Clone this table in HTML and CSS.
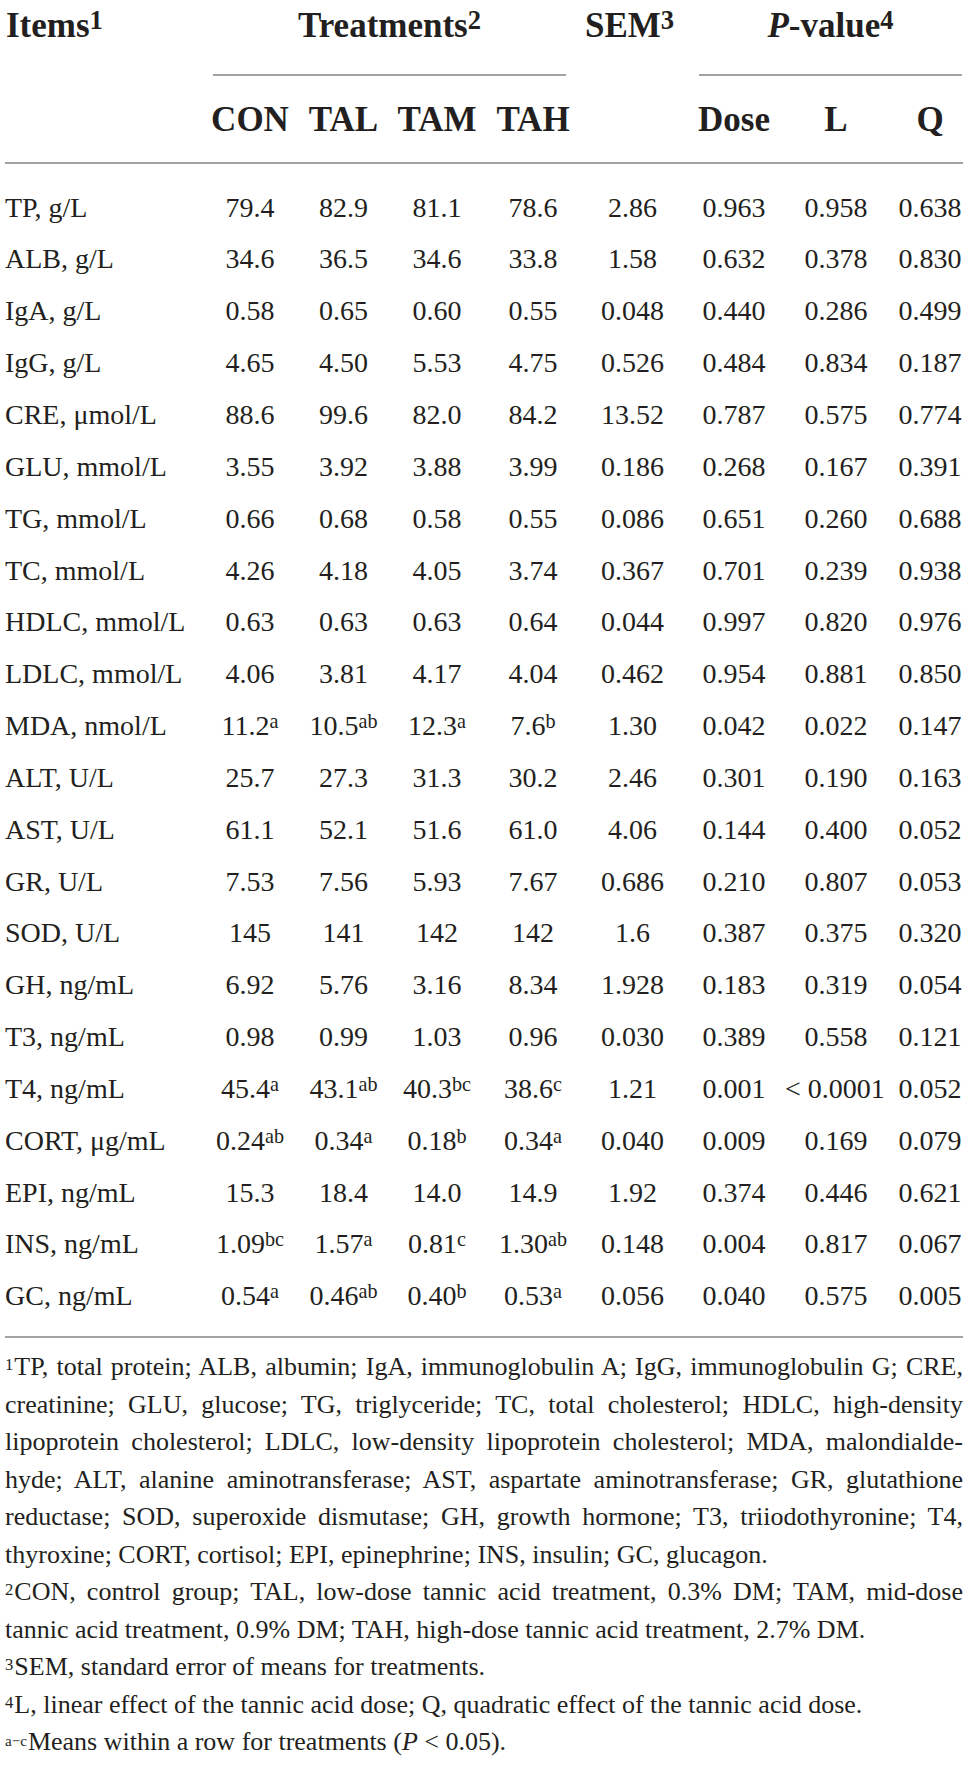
FILE: index.html
```html
<!DOCTYPE html>
<html lang="en">
<head>
<meta charset="utf-8">
<title>Serum biochemical parameters</title>
<link rel="stylesheet" href="styles.css">
</head>
<body>
<div class="page">
  <div class="tbl">
    <div class="grid hrow1">
      <div class="items">Items<sup class="hs">1</sup></div>
      <div class="span4">Treatments<sup class="hs">2</sup></div>
      <div class="sem">SEM<sup class="hs">3</sup></div>
      <div class="span3"><i>P</i>-value<sup class="hs">4</sup></div>
    </div>
    <div class="grid hrow2">
      <div></div>
      <div>CON</div>
      <div>TAL</div>
      <div>TAM</div>
      <div>TAH</div>
      <div></div>
      <div>Dose</div>
      <div>L</div>
      <div class="q">Q</div>
    </div>
    <div class="tbody">
      <div class="grid row"><div class="lab">TP, g/L</div><div>79.4</div><div>82.9</div><div>81.1</div><div>78.6</div><div>2.86</div><div>0.963</div><div>0.958</div><div class="q">0.638</div></div>
      <div class="grid row"><div class="lab">ALB, g/L</div><div>34.6</div><div>36.5</div><div>34.6</div><div>33.8</div><div>1.58</div><div>0.632</div><div>0.378</div><div class="q">0.830</div></div>
      <div class="grid row"><div class="lab">IgA, g/L</div><div>0.58</div><div>0.65</div><div>0.60</div><div>0.55</div><div>0.048</div><div>0.440</div><div>0.286</div><div class="q">0.499</div></div>
      <div class="grid row"><div class="lab">IgG, g/L</div><div>4.65</div><div>4.50</div><div>5.53</div><div>4.75</div><div>0.526</div><div>0.484</div><div>0.834</div><div class="q">0.187</div></div>
      <div class="grid row"><div class="lab">CRE, μmol/L</div><div>88.6</div><div>99.6</div><div>82.0</div><div>84.2</div><div>13.52</div><div>0.787</div><div>0.575</div><div class="q">0.774</div></div>
      <div class="grid row"><div class="lab">GLU, mmol/L</div><div>3.55</div><div>3.92</div><div>3.88</div><div>3.99</div><div>0.186</div><div>0.268</div><div>0.167</div><div class="q">0.391</div></div>
      <div class="grid row"><div class="lab">TG, mmol/L</div><div>0.66</div><div>0.68</div><div>0.58</div><div>0.55</div><div>0.086</div><div>0.651</div><div>0.260</div><div class="q">0.688</div></div>
      <div class="grid row"><div class="lab">TC, mmol/L</div><div>4.26</div><div>4.18</div><div>4.05</div><div>3.74</div><div>0.367</div><div>0.701</div><div>0.239</div><div class="q">0.938</div></div>
      <div class="grid row"><div class="lab">HDLC, mmol/L</div><div>0.63</div><div>0.63</div><div>0.63</div><div>0.64</div><div>0.044</div><div>0.997</div><div>0.820</div><div class="q">0.976</div></div>
      <div class="grid row"><div class="lab">LDLC, mmol/L</div><div>4.06</div><div>3.81</div><div>4.17</div><div>4.04</div><div>0.462</div><div>0.954</div><div>0.881</div><div class="q">0.850</div></div>
      <div class="grid row"><div class="lab">MDA, nmol/L</div><div>11.2<sup class="ds">a</sup></div><div>10.5<sup class="ds">ab</sup></div><div>12.3<sup class="ds">a</sup></div><div>7.6<sup class="ds">b</sup></div><div>1.30</div><div>0.042</div><div>0.022</div><div class="q">0.147</div></div>
      <div class="grid row"><div class="lab">ALT, U/L</div><div>25.7</div><div>27.3</div><div>31.3</div><div>30.2</div><div>2.46</div><div>0.301</div><div>0.190</div><div class="q">0.163</div></div>
      <div class="grid row"><div class="lab">AST, U/L</div><div>61.1</div><div>52.1</div><div>51.6</div><div>61.0</div><div>4.06</div><div>0.144</div><div>0.400</div><div class="q">0.052</div></div>
      <div class="grid row"><div class="lab">GR, U/L</div><div>7.53</div><div>7.56</div><div>5.93</div><div>7.67</div><div>0.686</div><div>0.210</div><div>0.807</div><div class="q">0.053</div></div>
      <div class="grid row"><div class="lab">SOD, U/L</div><div>145</div><div>141</div><div>142</div><div>142</div><div>1.6</div><div>0.387</div><div>0.375</div><div class="q">0.320</div></div>
      <div class="grid row"><div class="lab">GH, ng/mL</div><div>6.92</div><div>5.76</div><div>3.16</div><div>8.34</div><div>1.928</div><div>0.183</div><div>0.319</div><div class="q">0.054</div></div>
      <div class="grid row"><div class="lab">T3, ng/mL</div><div>0.98</div><div>0.99</div><div>1.03</div><div>0.96</div><div>0.030</div><div>0.389</div><div>0.558</div><div class="q">0.121</div></div>
      <div class="grid row"><div class="lab">T4, ng/mL</div><div>45.4<sup class="ds">a</sup></div><div>43.1<sup class="ds">ab</sup></div><div>40.3<sup class="ds">bc</sup></div><div>38.6<sup class="ds">c</sup></div><div>1.21</div><div>0.001</div><div class="lt">&lt; 0.0001</div><div class="q">0.052</div></div>
      <div class="grid row"><div class="lab">CORT, μg/mL</div><div>0.24<sup class="ds">ab</sup></div><div>0.34<sup class="ds">a</sup></div><div>0.18<sup class="ds">b</sup></div><div>0.34<sup class="ds">a</sup></div><div>0.040</div><div>0.009</div><div>0.169</div><div class="q">0.079</div></div>
      <div class="grid row"><div class="lab">EPI, ng/mL</div><div>15.3</div><div>18.4</div><div>14.0</div><div>14.9</div><div>1.92</div><div>0.374</div><div>0.446</div><div class="q">0.621</div></div>
      <div class="grid row"><div class="lab">INS, ng/mL</div><div>1.09<sup class="ds">bc</sup></div><div>1.57<sup class="ds">a</sup></div><div>0.81<sup class="ds">c</sup></div><div>1.30<sup class="ds">ab</sup></div><div>0.148</div><div>0.004</div><div>0.817</div><div class="q">0.067</div></div>
      <div class="grid row"><div class="lab">GC, ng/mL</div><div>0.54<sup class="ds">a</sup></div><div>0.46<sup class="ds">ab</sup></div><div>0.40<sup class="ds">b</sup></div><div>0.53<sup class="ds">a</sup></div><div>0.056</div><div>0.040</div><div>0.575</div><div class="q">0.005</div></div>
    </div>
  </div>
  <div class="notes">
    <p><sup class="fs">1</sup>TP, total protein; ALB, albumin; IgA, immunoglobulin A; IgG, immunoglobulin G; CRE, creatinine; GLU, glucose; TG, triglyceride; TC, total cholesterol; HDLC, high-density lipoprotein cholesterol; LDLC, low-density lipoprotein cholesterol; MDA, malondialde&shy;hyde; ALT, alanine aminotransferase; AST, aspartate aminotransferase; GR, glutathione reductase; SOD, superoxide dismutase; GH, growth hormone; T3, triiodothyronine; T4, thyroxine; CORT, cortisol; EPI, epinephrine; INS, insulin; GC, glucagon.</p>
    <p><sup class="fs">2</sup>CON, control group; TAL, low-dose tannic acid treatment, 0.3% DM; TAM, mid-dose tannic acid treatment, 0.9% DM; TAH, high-dose tannic acid treatment, 2.7% DM.</p>
    <p><sup class="fs">3</sup>SEM, standard error of means for treatments.</p>
    <p><sup class="fs">4</sup>L, linear effect of the tannic acid dose; Q, quadratic effect of the tannic acid dose.</p>
    <p><sup class="fs fs-ac">a−c</sup>Means within a row for treatments (<i>P</i> &lt; 0.05).</p>
  </div>
</div>
</body>
</html>
```

FILE: styles.css
```css
* {
  box-sizing: border-box;
  margin: 0;
  padding: 0;
}

html, body {
  background: #ffffff;
}

body {
  margin: 0;
  color: #231f20;
  font-family: "Liberation Serif", "Times New Roman", serif;
}

.page {
  width: 968px;
  padding: 0 5px;
}

.grid {
  display: grid;
  grid-template-columns: 198px 94px 93px 94px 98px 101px 102px 102px 76px;
}

/* header row 1 */
.hrow1 {
  height: 76px;
  font-size: 35px;
  font-weight: bold;
  line-height: 52px;
  text-align: center;
}

.hrow1 .items {
  text-align: left;
  padding-left: 1px;
}

.hrow1 .span4 {
  grid-column: span 4;
  margin: 0 16px 0 10px;
  border-bottom: 2px solid #a3a3a3;
}

.hrow1 .span3 {
  grid-column: span 3;
  margin: 0 1px 0 16px;
  border-bottom: 2px solid #a3a3a3;
}

.hrow1 .sem {
  padding-right: 6px;
}

.hs {
  font-size: 0.76em;
  vertical-align: 0.3em;
  line-height: 1;
}

/* header row 2 */
.hrow2 {
  height: 88px;
  padding-top: 18px;
  border-bottom: 2px solid #a3a3a3;
  font-size: 35px;
  font-weight: bold;
  line-height: 52px;
  text-align: center;
}

.q {
  padding-left: 10px;
}

/* body */
.tbody {
  padding: 17.6px 0 14px;
  border-bottom: 2px solid #a3a3a3;
}

.row {
  height: 51.85px;
  font-size: 28px;
  line-height: 51.85px;
  text-align: center;
  white-space: nowrap;
}

.row .lab {
  text-align: left;
}

.row .lt {
  padding-right: 12px;
}

.ds {
  font-size: 0.72em;
  vertical-align: 0.36em;
  line-height: 1;
}

/* footnotes */
.notes {
  margin-top: 10px;
  font-size: 26px;
  line-height: 37.5px;
  text-align: justify;
}

.notes p {
  margin: 0;
}

.fs {
  font-size: 0.64em;
  vertical-align: 0.3em;
  line-height: 1;
  margin-right: 1px;
}

.fs-ac {
  font-size: 0.58em;
  vertical-align: 0.3em;
}
```
